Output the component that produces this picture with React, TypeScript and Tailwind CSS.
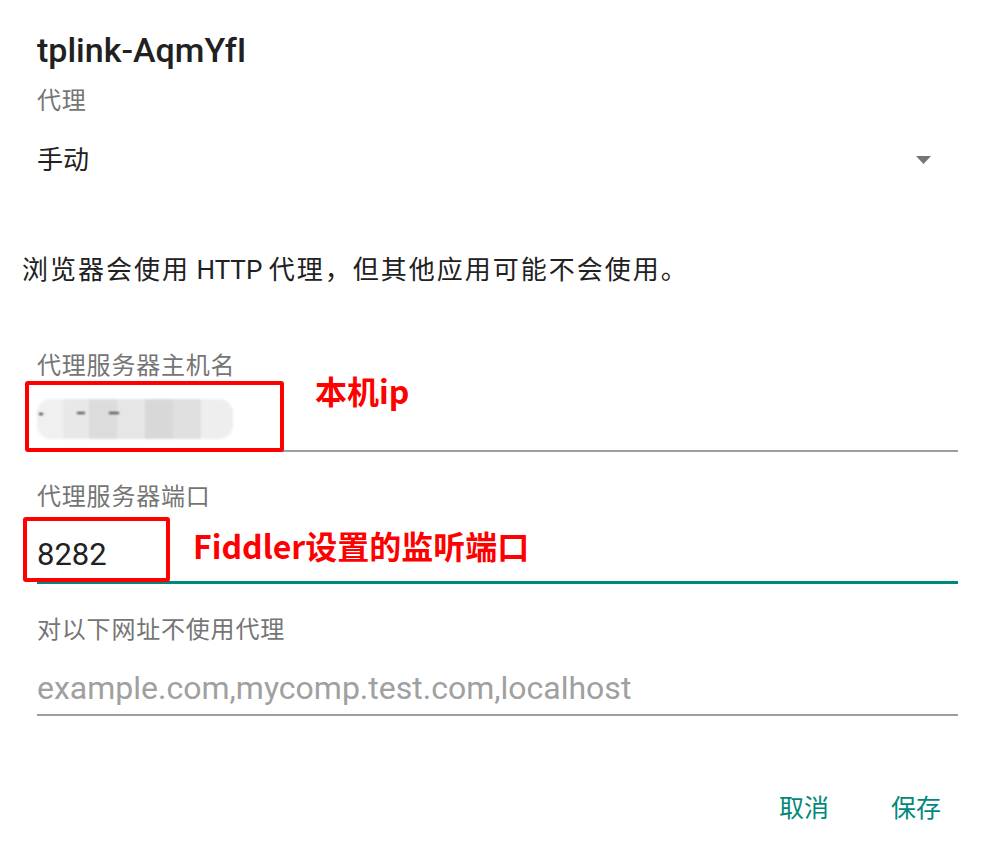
const font = "font-['Roboto','Noto_Sans_CJK_SC',sans-serif]";

function BlurredIp() {
  // pixelated / blurred host name
  return (
    <div className="relative flex h-[40px] w-[196px] items-stretch overflow-hidden rounded-[14px] blur-[1px]">
      <div className="w-[26px] bg-[#f0f0f0]" />
      <div className="w-[26px] bg-[#e8e8e8]" />
      <div className="w-[28px] bg-[#dcdcdc]" />
      <div className="w-[28px] bg-[#e6e6e6]" />
      <div className="w-[28px] bg-[#d8d8d8]" />
      <div className="w-[28px] bg-[#e0e0e0]" />
      <div className="w-[32px] bg-[#eeeeee]" />
      <div className="absolute left-[2px] top-[14px] h-[2px] w-[4px] bg-[#333]" />
      <div className="absolute left-[40px] top-[13px] h-[2px] w-[8px] bg-[#444]" />
      <div className="absolute left-[72px] top-[13px] h-[2px] w-[10px] bg-[#444]" />
    </div>
  );
}

export default function App() {
  return (
    <div className={`relative h-[845px] w-[986px] overflow-hidden bg-white ${font}`}>
      <div className="flex flex-col pl-[37px] pr-[28px] pt-[25px]">
        {/* Title */}
        <div className="flex h-[50px] items-center text-[34px] font-medium leading-[50px] text-[#212121]">
          tplink-AqmYfI
        </div>

        {/* Proxy spinner */}
        <div className="mt-[11px] flex h-[30px] items-center text-[24px] leading-[30px] tracking-[0.8px] text-[#757575]">代理</div>
        <div className="mt-[24px] flex h-[40px] items-center justify-between">
          <span className="text-[26px] leading-[40px] text-[#212121]">手动</span>
          <svg width="15" height="8" viewBox="0 0 15 8" className="mr-[27px]">
            <polygon points="0,0 15,0 7.5,8" fill="#757575" />
          </svg>
        </div>

        {/* Warning */}
        <div className="ml-[-15px] mt-[70px] flex h-[40px] items-center whitespace-pre text-[26px] leading-[40px] text-[#212121]">
          <span className="tracking-[2px]">浏览器会使用</span>
          <span> HTTP </span>
          <span className="tracking-[2px]">代理，但其他应用可能不会使用。</span>
        </div>

        {/* Host */}
        <div className="mt-[61px] flex h-[30px] items-center text-[24px] leading-[30px] tracking-[0.8px] text-[#757575]">代理服务器主机名</div>
        <div className="relative h-[71px] border-b-2 border-[#9e9e9e]">
          <div className="mt-[18px]">
            <BlurredIp />
          </div>
          <div className="absolute left-[-12px] top-0 h-[71px] w-[259px] rounded-[3px] border-4 border-[#ff0000]" />
          <div className="absolute left-[278px] top-[-11px] h-[40px] font-['Noto_Sans_CJK_SC',sans-serif] text-[32px] font-bold leading-[40px] text-[#ff0000]">
            本机ip
          </div>
        </div>

        {/* Port */}
        <div className="mt-[30px] flex h-[30px] items-center text-[24px] leading-[30px] tracking-[0.8px] text-[#757575]">代理服务器端口</div>
        <div className="relative h-[72px] border-b-[3px] border-[#00897b]">
          <div className="mt-[28px] h-[30px] text-[31px] leading-[30px] text-[#212121]">8282</div>
          <div className="absolute left-[-14px] top-[5px] h-[65px] w-[147px] rounded-[3px] border-4 border-[#ff0000]" />
          <div className="absolute left-[156px] top-[13px] h-[40px] font-['Noto_Sans_CJK_SC',sans-serif] text-[32px] font-bold leading-[40px] text-[#ff0000]">
            Fiddler设置的监听端口
          </div>
        </div>

        {/* Bypass */}
        <div className="mt-[31px] flex h-[30px] items-center text-[24px] leading-[30px] tracking-[0.8px] text-[#757575]">对以下网址不使用代理</div>
        <div className="h-[71px] border-b-2 border-[#9e9e9e]">
          <div className="mt-[28px] h-[30px] text-[32px] leading-[30px] text-[#a0a0a0]">
            example.com,mycomp.test.com,localhost
          </div>
        </div>
      </div>

      {/* Buttons */}
      <div className="mt-[73px] flex h-[40px] items-center justify-end gap-[62px] pr-[45px] text-[25px] leading-[40px] text-[#00897b]">
        <span>取消</span>
        <span>保存</span>
      </div>
    </div>
  );
}
